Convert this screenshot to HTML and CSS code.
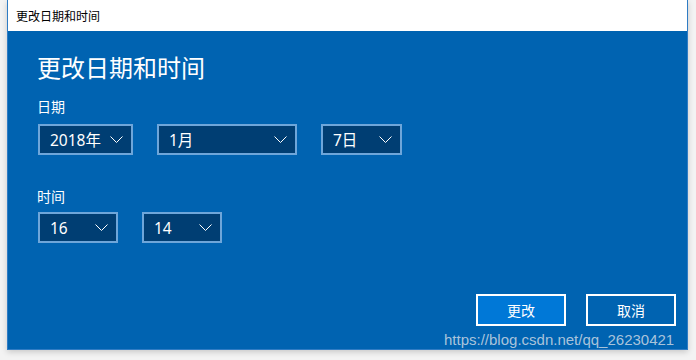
FILE: index.html
```html
<!DOCTYPE html>
<html lang="zh">
<head>
    <meta charset="UTF-8">
    <title>更改日期和时间</title>
    <link rel="stylesheet" href="styles.css">
</head>
<body>
    <div class="window">
        <div class="titlebar">更改日期和时间</div>
        <div class="content">
            <div class="heading">更改日期和时间</div>

            <div class="label">日期</div>
            <div class="row">
                <div class="select w-year">
                    <span>2018年</span>
                    <svg class="chevron" width="13" height="7" viewBox="0 0 13 7"><polyline points="0.5,0.5 6.5,6.5 12.5,0.5" /></svg>
                </div>
                <div class="select w-month">
                    <span>1月</span>
                    <svg class="chevron" width="13" height="7" viewBox="0 0 13 7"><polyline points="0.5,0.5 6.5,6.5 12.5,0.5" /></svg>
                </div>
                <div class="select w-day">
                    <span>7日</span>
                    <svg class="chevron" width="13" height="7" viewBox="0 0 13 7"><polyline points="0.5,0.5 6.5,6.5 12.5,0.5" /></svg>
                </div>
            </div>

            <div class="label label-time">时间</div>
            <div class="row">
                <div class="select w-time">
                    <span>16</span>
                    <svg class="chevron" width="13" height="7" viewBox="0 0 13 7"><polyline points="0.5,0.5 6.5,6.5 12.5,0.5" /></svg>
                </div>
                <div class="select w-time">
                    <span>14</span>
                    <svg class="chevron" width="13" height="7" viewBox="0 0 13 7"><polyline points="0.5,0.5 6.5,6.5 12.5,0.5" /></svg>
                </div>
            </div>

            <div class="buttons">
                <div class="btn btn-primary">更改</div>
                <div class="btn">取消</div>
            </div>
        </div>
    </div>
    <div class="watermark">https://blog.csdn.net/qq_26230421</div>
</body>
</html>
```

FILE: styles.css
```css
body {
    margin: 0;
    padding: 0;
    width: 696px;
    height: 360px;
    overflow: hidden;
    background-color: #f3f3f3;
    font-family: "Noto Sans", "Noto Sans CJK SC", sans-serif;
    position: relative;
}

.window {
    margin-left: 7px;
    width: 679px;
    height: 349px;
    border: 1px solid #2f7cc4;
    border-top: none;
    background-color: #0063b1;
    display: flex;
    flex-direction: column;
    box-shadow: 0 2px 6px rgba(0,0,0,0.18);
}

.titlebar {
    height: 31px;
    line-height: 31px;
    background-color: #fff;
    color: #000;
    font-size: 12px;
    padding-left: 8px;
    font-family: "Noto Sans CJK SC", sans-serif;
}

.content {
    flex: 1;
    display: flex;
    flex-direction: column;
    padding: 20px 11px 23px 29px;
    color: #fff;
}

.heading {
    font-size: 24px;
    line-height: 32px;
    font-family: "Noto Sans CJK SC", sans-serif;
}

.label {
    font-size: 14px;
    line-height: 20px;
    margin-top: 13px;
    margin-bottom: 8px;
    font-family: "Noto Sans CJK SC", sans-serif;
}

.label-time {
    margin-top: 31px;
    margin-bottom: 6px;
}

.row {
    display: flex;
    gap: 24px;
    margin-left: 1px;
}

.select {
    box-sizing: border-box;
    height: 31px;
    border: 2px solid #6ea6da;
    background-color: #003e73;
    display: flex;
    align-items: center;
    justify-content: space-between;
    padding: 0 8px 0 10px;
    font-size: 15.5px;
}

    .select .chevron {
        fill: none;
        stroke: #fff;
        stroke-width: 1;
    }

.w-year { width: 95px; }
.w-month { width: 140px; }
.w-day { width: 81px; }
.w-time { width: 80px; }

.buttons {
    margin-top: auto;
    display: flex;
    justify-content: flex-end;
    gap: 20px;
}

.btn {
    box-sizing: border-box;
    width: 90px;
    height: 32px;
    border: 2px solid #fff;
    text-align: center;
    line-height: 28px;
    font-size: 14px;
    font-family: "Noto Sans CJK SC", sans-serif;
}

.btn-primary {
    background-color: #0078d7;
}

/* 水印 */
.watermark {
    position: absolute;
    left: 444px;
    top: 331px;
    font-family: "Liberation Sans", Arial, sans-serif;
    font-size: 15px;
    color: rgba(215,222,230,0.8);
}
```
